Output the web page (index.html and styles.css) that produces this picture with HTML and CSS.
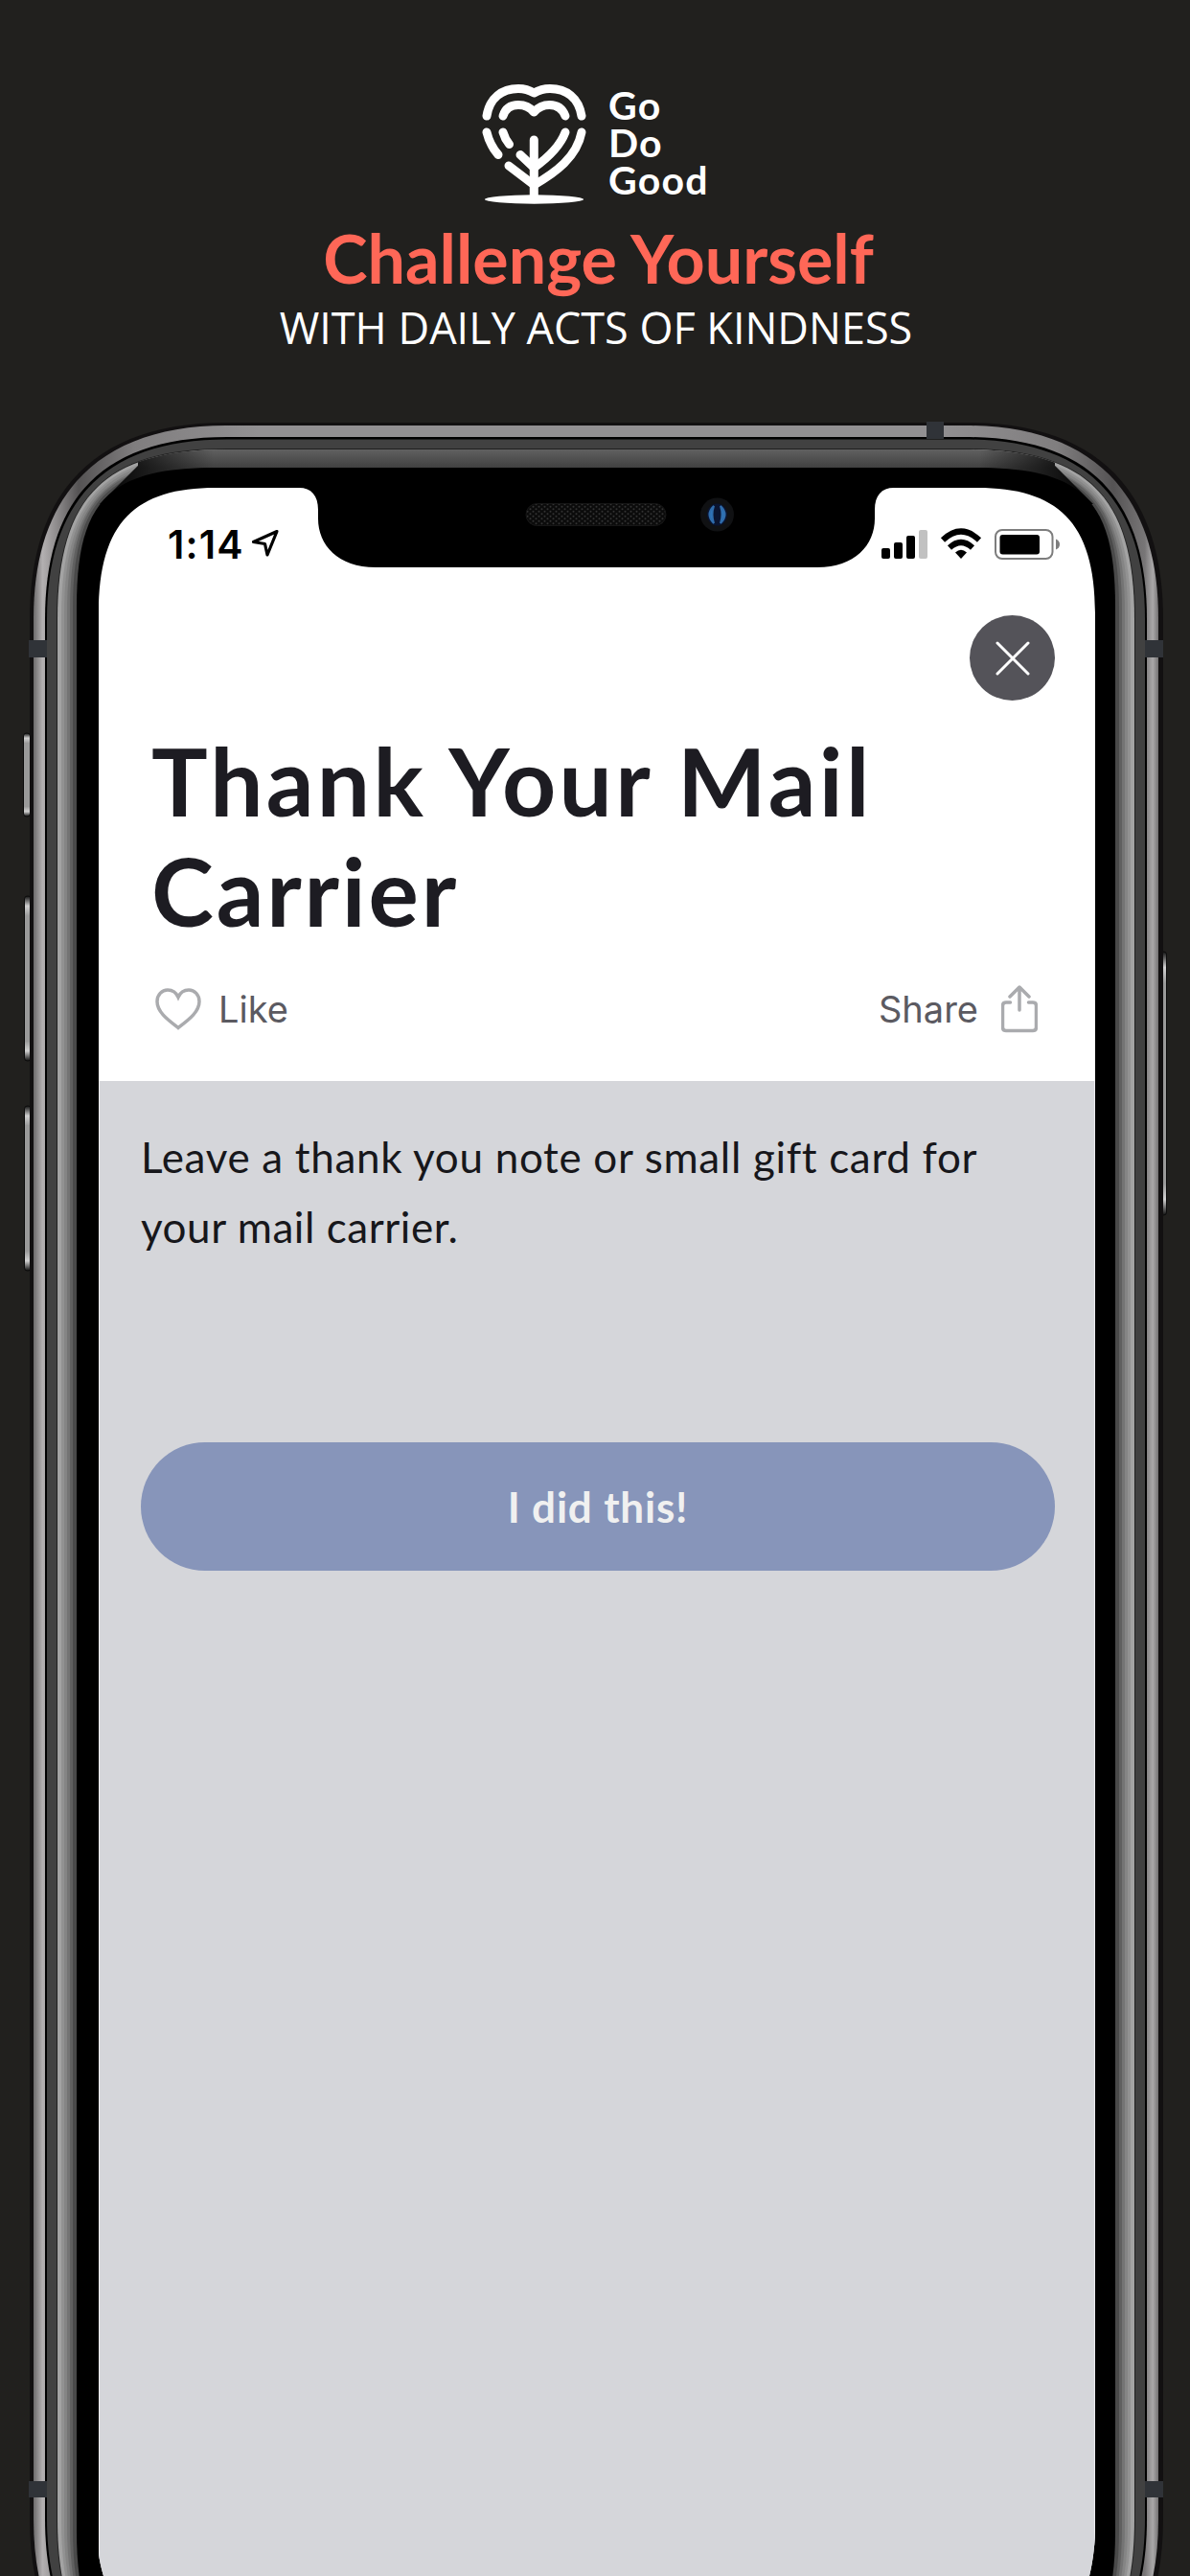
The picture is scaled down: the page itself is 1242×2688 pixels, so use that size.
FILE: index.html
```html
<!DOCTYPE html>
<html lang="en">
<head>
<meta charset="utf-8">
<title>Go Do Good</title>
<link rel="stylesheet" href="styles.css">
</head>
<body>
<main class="poster">
  <svg class="phone" viewBox="0 0 1242 2688" aria-hidden="true">
    <defs>
      <linearGradient id="steel" gradientUnits="userSpaceOnUse" x1="35" x2="1209" y1="0" y2="0">
        <stop offset="0" stop-color="#6d6b6c"/><stop offset=".008" stop-color="#b3b0b1"/>
        <stop offset=".04" stop-color="#555354"/><stop offset=".09" stop-color="#807e7f"/>
        <stop offset=".2" stop-color="#929092"/><stop offset=".8" stop-color="#929092"/>
        <stop offset=".91" stop-color="#807e7f"/><stop offset=".96" stop-color="#555354"/>
        <stop offset=".988" stop-color="#787677"/><stop offset=".995" stop-color="#aaa8a9"/><stop offset="1" stop-color="#747273"/>
      </linearGradient>
      <linearGradient id="topEdge" gradientUnits="userSpaceOnUse" x1="0" x2="0" y1="468" y2="488">
        <stop offset="0" stop-color="#626262"/><stop offset="1" stop-color="#414141"/>
      </linearGradient>
      <linearGradient id="topFade" gradientUnits="userSpaceOnUse" x1="110" x2="1135" y1="0" y2="0">
        <stop offset="0" stop-color="#000" stop-opacity=".95"/><stop offset=".11" stop-color="#000" stop-opacity="0"/>
        <stop offset=".89" stop-color="#000" stop-opacity="0"/><stop offset="1" stop-color="#000" stop-opacity=".95"/>
      </linearGradient>
      <linearGradient id="key" x1="0" x2="0" y1="0" y2="1">
        <stop offset="0" stop-color="#111"/><stop offset=".06" stop-color="#d0d0d0"/><stop offset=".12" stop-color="#9a9a9a"/>
        <stop offset=".88" stop-color="#9a9a9a"/><stop offset=".94" stop-color="#d0d0d0"/><stop offset="1" stop-color="#111"/>
      </linearGradient>
      <pattern id="mesh" width="6" height="5" patternUnits="userSpaceOnUse">
        <rect width="6" height="5" fill="#0b0b0b"/><circle cx="1.5" cy="1.2" r="1" fill="#333"/><circle cx="4.5" cy="3.7" r="1" fill="#333"/>
      </pattern>
      <clipPath id="topClip"><path d="M144 460V486L104 526H1141L1101 486V460Z"/></clipPath>
      <path id="bezel" d="M60 646c0-128 49-177 177-177h770c128 0 177 49 177 177v1982c0 128-49 177-177 177h-770c-128 0-177-49-177-177z"/>
    </defs>
    <g fill="url(#key)" stroke="#0c0c0c">
      <rect x="24.500" y="765" width="7" height="87" rx="3"/>
      <rect x="25.500" y="935" width="7" height="172" rx="3"/>
      <rect x="25.500" y="1154" width="7" height="172" rx="3"/>
      <rect x="1210.500" y="993" width="7" height="275" rx="3"/>
    </g>
    <path fill="#121011" d="M31 646c0-135 70-205 205-205h773c135 0 205 70 205 205v1982c0 135-70 205-205 205h-773c-135 0-205-70-205-205z"/>
    <path fill="url(#steel)" d="M35 645c0-131 70-201 201-201h772c131 0 201 70 201 201v1984c0 131-70 201-201 201h-772c-131 0-201-70-201-201z"/>
    <path fill="#000" d="M47 646c0-128 62-190 190-190h770c128 0 190 62 190 190v1982c0 128-62 190-190 190h-770c-128 0-190-62-190-190z"/>
    <path fill="#414141" d="M49 646.500c0-126 62-188 188-188h770c126 0 188 62 188 188v1981c0 126-62 188-188 188h-770c-126 0-188-62-188-188z"/>
    <path fill="#202020" d="M59 646c0-128 50-178 178-178h770c128 0 178 50 178 178v1982c0 128-50 178-178 178h-770c-128 0-178-50-178-178z"/>
    <use href="#bezel" fill="#a3a3a3"/>
    <path fill="#929292" d="M64 643.500c0-125 46-171 171-171h774c125 0 171 46 171 171v1987c0 125-46 171-171 171h-774c-125 0-171-46-171-171z"/>
    <path fill="#858585" d="M67 641.500c0-122 44-166 166-166h778c122 0 166 44 166 166v1992c0 122-44 166-166 166h-778c-122 0-166-44-166-166z"/>
    <path fill="#747474" d="M70 639.500c0-119 42-161 161-161h782c119 0 161 42 161 161v1996c0 119-42 161-161 161h-782c-119 0-161-42-161-161z"/>
    <path fill="#606060" d="M73 637c0-117 39-156 156-156h786c117 0 156 39 156 156v2000c0 117-39 156-156 156h-786c-117 0-156-39-156-156z"/>
    <path fill="#4a4a4a" d="M76 635c0-114 37-151 151-151h790c114 0 151 37 151 151v2004c0 114-37 151-151 151h-790c-114 0-151-37-151-151z"/>
    <g clip-path="url(#topClip)">
      <use href="#bezel" fill="url(#topEdge)"/>
      <use href="#bezel" fill="url(#topFade)"/>
    </g>
    <path fill="#000" d="M80 633c0-111 34-145 145-145h794c111 0 145 34 145 145v2008c0 111-34 145-145 145h-794c-111 0-145-34-145-145z"/>
    <g fill="#303338">
      <rect x="30" y="668" width="19" height="18"/><rect x="1195" y="668" width="19" height="18"/>
      <rect x="967" y="440" width="18" height="18"/>
      <rect x="30" y="2589" width="19" height="17"/><rect x="1195" y="2589" width="19" height="17"/>
    </g>
    <rect x="549" y="525.500" width="146" height="23" rx="11.500" fill="url(#mesh)" stroke="#161616"/>
    <circle cx="748.500" cy="537" r="17.500" fill="#101113"/>
    <ellipse cx="748.500" cy="537" rx="10.500" ry="11.500" fill="#0a1430"/>
    <path d="M745 528Q736 537 745 546Q742 537 745 528ZM752 528Q761 537 752 546Q755 537 752 528Z" fill="#2f78bd" stroke="#2f6cab" stroke-width="2"/>
  </svg>

  <header class="brand">
    <div class="logo">
      <svg class="logo-mark" viewBox="500 84 120 130" fill="none" stroke="#fff" stroke-width="9" stroke-linecap="round" stroke-linejoin="round">
        <path d="M508 121C511 102 524 92.500 541 92.500Q550 92.500 557.300 97Q565 92.500 574 92.500C591 92.500 604 102 607 121"/>
        <path d="M525 121C527.500 113 533 109.500 541 109.500Q551 109.500 557.300 117Q564 109.500 573.500 109.500C581.500 109.500 587 113 590 121"/>
        <path d="M508 138Q511 151 520 161.500M525 138Q527 145 531.500 150.500"/>
        <path d="M590 138C584 154 570 166 557.300 175L543 161.500"/>
        <path d="M607 138C602 164 580 180 557.300 193L531 173"/>
        <path d="M557.300 146V204"/>
        <ellipse cx="557.500" cy="208" rx="51.500" ry="4.700" fill="#fff" stroke="none"/>
      </svg>
      <div class="logo-name">Go<br>Do<br>Good</div>
    </div>
    <h1 class="headline">Challenge Yourself</h1>
    <p class="tagline">WITH DAILY ACTS OF KINDNESS</p>
  </header>

  <section class="screen">
    <div class="status">
      <span class="time">1:14</span>
      <svg class="locate" viewBox="0 0 32 32"><path d="M28 3.500L3.500 14.500L15.500 16.500L18 28Z" fill="none" stroke="#000" stroke-width="3.200" stroke-linejoin="round"/></svg>
      <svg class="signals" viewBox="918 549 192 38">
        <rect x="920" y="572" width="9" height="11" rx="2"/><rect x="933" y="566" width="9" height="17" rx="2"/>
        <rect x="946" y="559" width="9" height="24" rx="2"/><rect x="959" y="553" width="9" height="30" rx="2" fill="#c1c1c1"/>
        <g fill="none" stroke="#000" stroke-width="6"><path d="M984 563.500Q1003 545.500 1022 563.500"/><path d="M991 571.500Q1003 560.500 1015 571.500"/></g>
        <path d="M997 576.500Q1003 571 1009 576.500L1003 583Z"/>
        <rect x="1039" y="553" width="59.500" height="30" rx="7" fill="none" stroke="#7d7d7d" stroke-width="2"/>
        <rect x="1043.500" y="558" width="41.500" height="20.500" rx="3"/>
        <path d="M1102 562.500Q1106 564 1106 568T1102 573.500Z" fill="#7d7d7d"/>
      </svg>
    </div>
    <div class="close-row">
      <button class="close" aria-label="Close"><svg viewBox="0 0 36 36"><path d="M2 2L34 34M34 2L2 34" stroke="#fff" stroke-width="3" stroke-linecap="round"/></svg></button>
    </div>
    <h2 class="title"><span class="title-first">Thank Your Mail</span><br><span class="title-second">Carrier</span></h2>
    <div class="actions">
      <div class="action">
        <svg class="heart" viewBox="0 0 48 44"><path d="M24 41.500C13 33 2 25 2 14C2 7 7 2 13 2C18 2 22 5 24 9.500C26 5 30 2 35 2C41 2 46 7 46 14C46 25 35 33 24 41.500Z"/></svg>
        <span class="like">Like</span>
      </div>
      <div class="action">
        <span class="share">Share</span>
        <svg class="share-icon" viewBox="0 0 38 50"><path d="M9.500 18H5Q1.500 18 1.500 21.500V44Q1.500 47.500 5 47.500H33Q36.500 47.500 36.500 44V21.500Q36.500 18 33 18H28.500M19 26V3M9 12L19 2L29 12"/></svg>
      </div>
    </div>
    <div class="panel">
      <p class="desc"><span class="desc-first">Leave a thank you note or small gift card for</span><br><span class="desc-second">your mail carrier.</span></p>
      <button class="done"><span>I did this!</span></button>
    </div>
  </section>
</main>
</body>
</html>
```
FILE: styles.css
```css
* { box-sizing: border-box; }
body { margin: 0; background: #21201e; }
h1, h2, p { margin: 0; }
button { border: 0; padding: 0; font: inherit; }
svg { display: block; }

.poster {
  position: relative;
  width: 1242px;
  height: 2688px;
  overflow: hidden;
  font-family: Lato, "Noto Sans", sans-serif;
}
.phone { position: absolute; inset: 0; width: 1242px; height: 2688px; }

.brand { position: relative; height: 509px; padding-top: 84px; text-align: center; white-space: nowrap; }
.logo { display: flex; gap: 15px; padding-left: 500px; height: 130px; }
.logo-mark { width: 120px; height: 130px; }
.logo-name { padding-top: 6px; color: #fff; font-size: 41px; line-height: 39px; font-weight: 700; letter-spacing: 1.2px; text-align: left; }
.headline { margin-top: 20px; padding-left: 7px; color: #ff6757; font-size: 70px; line-height: 70px; font-weight: 700; }
.tagline { margin-top: 13px; padding-left: 2px; color: #fff; font-family: "Open Sans", sans-serif; font-size: 45px; line-height: 50px; }

.screen {
  position: relative;
  display: flex;
  flex-direction: column;
  width: 1040px;
  height: 2179px;
  margin-left: 103px;
  background: #fff;
  clip-path: path("M0 131C0 35 39 0 122 0H209C222 0 229 8 229 23V32C229 60 250 83 289 83H750C789 83 810 60 810 32V23C810 8 817 0 830 0H917C1000 0 1040 35 1040 131V2125C1040 2145 1038 2162 1034 2179H5C2 2168 0 2160 0 2150Z");
}
.status { display: flex; align-items: flex-start; height: 133px; padding: 40px 33px 0 72px; }
.time { width: 86px; font: 600 41px/39px Inter, sans-serif; letter-spacing: 1.2px; white-space: nowrap; }
.locate { width: 32px; height: 32px; margin-top: 2px; }
.signals { width: 192px; height: 38px; margin-left: auto; }

.close-row { display: flex; justify-content: flex-end; padding-right: 42px; }
.close { display: grid; place-items: center; width: 89px; height: 89px; border-radius: 50%; background: #545359; }
.close svg { width: 36px; height: 36px; }

.title { margin-top: 26px; padding-left: 55px; color: #1d1c22; font-size: 98px; line-height: 115px; font-weight: 700; letter-spacing: 3.3px; white-space: nowrap; }
.title-second { letter-spacing: 2.8px; }

.actions { display: flex; flex-shrink: 0; justify-content: space-between; align-items: center; height: 50px; margin-top: 41px; padding: 0 60px 0 59px; font: 400 38px/48px Inter, sans-serif; color: #5b5a61; }
.action { display: flex; align-items: center; }
.heart { width: 48px; height: 44px; margin-right: 18px; fill: none; stroke: #aaabae; stroke-width: 3.5; }
.share-icon { width: 38px; height: 50px; margin-left: 24px; fill: none; stroke: #aaabae; stroke-width: 3.5; stroke-linecap: round; stroke-linejoin: round; }

.panel { height: 1560px; flex-shrink: 0; margin-top: auto; padding: 43px 42px 0 43px; border: solid #ededf0; border-width: 0 1px; background: #d5d6da; }
.desc { color: #17171b; font-size: 44px; line-height: 73px; letter-spacing: 0.68px; white-space: nowrap; }
.desc-second { letter-spacing: 0.55px; }
.done { display: block; width: 954px; height: 134px; margin-top: 188px; border-radius: 67px; background: #8795ba; color: #f0f0f0; font-size: 44px; font-weight: 700; letter-spacing: 0.8px; }
```
